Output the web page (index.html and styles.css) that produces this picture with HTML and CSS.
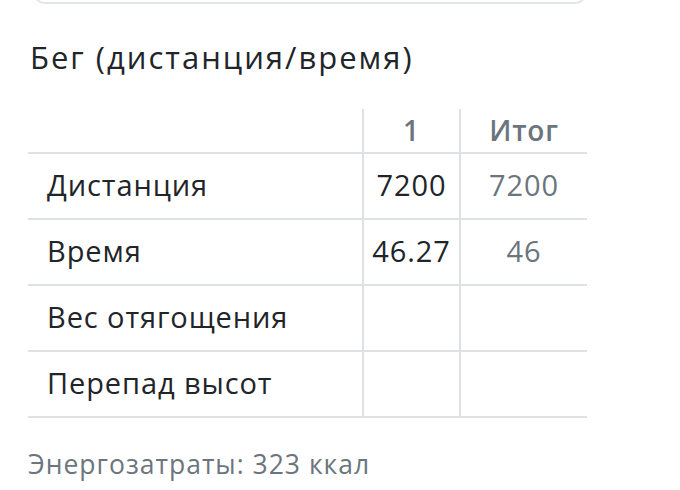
FILE: index.html
```html
<!DOCTYPE html>
<html lang="ru">
<head>
<meta charset="utf-8">
<link rel="stylesheet" href="styles.css">
</head>
<body>
<div class="page">
  <div class="card-stub"></div>
  <h2 class="title">Бег (дистанция/время)</h2>
  <table class="stats">
    <colgroup>
      <col class="c-name">
      <col class="c-set">
      <col class="c-total">
    </colgroup>
    <thead>
      <tr>
        <th class="name"></th>
        <th class="val">1</th>
        <th class="val">Итог</th>
      </tr>
    </thead>
    <tbody>
      <tr>
        <td class="name">Дистанция</td>
        <td class="val">7200</td>
        <td class="val total">7200</td>
      </tr>
      <tr>
        <td class="name">Время</td>
        <td class="val">46.27</td>
        <td class="val total">46</td>
      </tr>
      <tr>
        <td class="name">Вес отягощения</td>
        <td class="val"></td>
        <td class="val total"></td>
      </tr>
      <tr>
        <td class="name">Перепад высот</td>
        <td class="val"></td>
        <td class="val total"></td>
      </tr>
    </tbody>
  </table>
  <p class="energy">Энергозатраты: 323 ккал</p>
</div>
</body>
</html>
```
FILE: styles.css
```css
html, body {
  margin: 0;
  padding: 0;
  background: #ffffff;
}
body {
  font-family: "Open Sans", "Noto Sans", sans-serif;
  color: #212529;
  overflow: hidden;
}
.page {
  padding: 0 0 0 28px;
  width: 559px;
}
.card-stub {
  margin: -58px 0 0 5px;
  height: 62px;
  border: 2px solid #e3e6ea;
  border-radius: 12px;
  box-sizing: border-box;
}
.title {
  margin: 32px 0 0 2px;
  font-size: 31px;
  font-weight: 400;
  line-height: 42px;
  letter-spacing: 2px;
}
.stats {
  margin-top: 31px;
  width: 559px;
  border-collapse: collapse;
  table-layout: fixed;
  font-size: 29px;
  letter-spacing: 0.9px;
}
.c-name { width: 335px; }
.c-set { width: 97px; }
.c-total { width: 127px; }
.stats th, .stats td {
  line-height: 38px;
  padding: 12px 0 14px;
  border-bottom: 2px solid #dee2e6;
}
.stats th {
  padding: 2px 0 3px;
  font-size: 28px;
  font-weight: 600;
  letter-spacing: 0.8px;
  color: #6c757d;
}
.stats .name {
  padding-left: 19px;
  text-align: left;
}
.stats .val {
  text-align: center;
  border-left: 2px solid #dee2e6;
}
.stats td.total {
  color: #6c757d;
  font-weight: 500;
}
.energy {
  margin: 28px 0 0;
  font-size: 26.5px;
  line-height: 36px;
  letter-spacing: 1px;
  color: #6c757d;
}
```
